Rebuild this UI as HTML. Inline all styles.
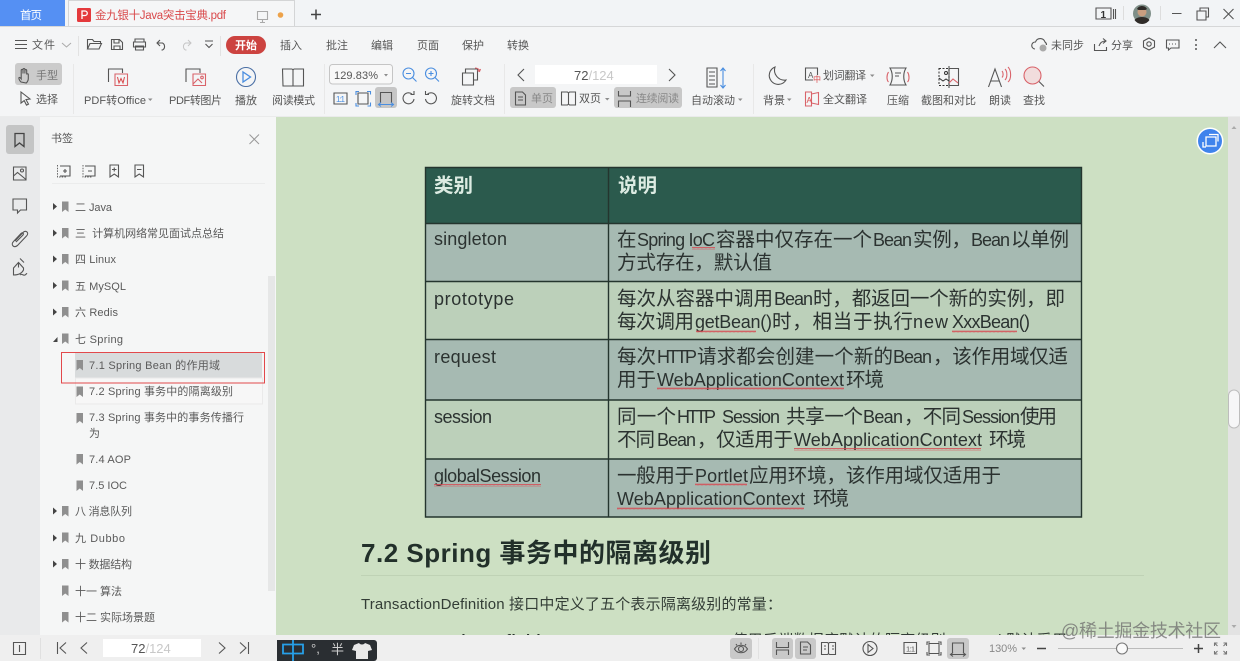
<!DOCTYPE html>
<html><head><meta charset="utf-8"><title>PDF</title>
<style>
html,body{margin:0;padding:0;width:1240px;height:661px;overflow:hidden;background:#f4f5f6}
svg{display:block;filter:blur(.35px)}
text{font-family:"Liberation Sans","Noto Sans CJK SC",sans-serif;white-space:pre}
.u{font-size:11px;fill:#555}
.t{font-size:19.5px;fill:#2b3230}
.l{font-size:18px;fill:#2b3230}
.i{fill:none;stroke:#555;stroke-width:1.1}
.b{fill:none;stroke:#4a8ee0;stroke-width:1.1}
.r{fill:none;stroke:#d9636a;stroke-width:1.1}
.m{fill:#8c8c8c}
</style></head><body>
<svg width="1240" height="661" viewBox="0 0 1240 661" xmlns="http://www.w3.org/2000/svg">
<defs><pattern id="w" width="4" height="3" patternUnits="userSpaceOnUse"><path d="M0 2.200L1 .8L2 2.200L3 .8L4 2.200" fill="none" stroke="#d8474f" stroke-width=".8"/></pattern></defs>
<!-- backgrounds -->
<rect width="1240" height="661" fill="#f4f5f6"/>
<rect width="1240" height="26" fill="#f2f4f6"/>
<rect y="26" width="1240" height="1" fill="#d6d7d8"/>
<rect x="0" y="117" width="40" height="518" fill="#e9eaeb"/>
<rect x="40" y="117" width="236" height="518" fill="#f5f6f6"/>
<rect x="276" y="117" width="952" height="518" fill="#cde0c3"/>
<rect x="1228" y="117" width="12" height="518" fill="#e3e3e3"/>
<rect y="116" width="1240" height="1" fill="#eaebeb"/>

<!-- tabs -->
<rect width="65" height="26" fill="#5590f3"/>
<text x="20" y="19" style="font-size:11.5px;fill:#fff" textLength="22">首页</text>
<path d="M68.500 26V.5H294.500V26" fill="#f5f6f7" stroke="#d4d5d6"/>
<rect x="77" y="8" width="14" height="14" rx="1.500" fill="#e4393c"/>
<path d="M82 19V11h3a2 2 0 0 1 0 4.500H82" fill="none" stroke="#fff" stroke-width="1.300"/>
<text x="95" y="19" style="font-size:11.5px;fill:#d9484a" textLength="131">金九银十Java突击宝典.pdf</text>
<path class="i" d="M257.500 11.500h10v8h-10zM262.500 19.500v2.500M260 22.500h5" style="stroke:#aaa"/>
<circle cx="280.500" cy="15" r="2.800" fill="#eda24a"/>
<path d="M316 9.500v10M311 14.500h10" stroke="#444" stroke-width="1.500"/>
<!-- title right -->
<path class="i" d="M1096 8h15v11h-15zM1113.500 9v10M1115.500 9v10"/>
<text x="1100.500" y="18" style="font-size:10px;fill:#333;font-weight:bold">1</text>
<rect x="1123" y="6" width="1" height="14" fill="#ddd"/>
<circle cx="1142" cy="13.500" r="9" fill="#7f8f88"/>
<circle cx="1142" cy="12" r="4.500" fill="#c99e80"/>
<path d="M1137 9c2-4 8-4 10 0l-1.500 1h-7zM1134.500 20c3-4 12-4 15 0a9 9 0 0 1-15 0z" fill="#2f2b28"/>
<rect x="1160" y="6" width="1" height="14" fill="#ddd"/>
<path class="i" d="M1172 13.500h9.500M1197 11h9v9h-9zM1200 11V8h8.500v9H1206"/>
<path class="i" d="M1223.500 9l10 10M1233.500 9l-10 10"/>

<!-- menu row -->
<path class="i" d="M15 40.500h12M15 44.500h12M15 48.500h12"/>
<text class="u" x="32" y="48.500" textLength="23">文件</text>
<path d="M62 43l4.500 4 4.500-4" fill="none" stroke="#aaa"/>
<rect x="78" y="36" width="1" height="20" fill="#e2e2e2"/>
<path class="i" d="M87.500 49V39.500h5l1.500 2h6.500v2M87.500 49l2.500-5.500h11.500L99 49z"/>
<path class="i" d="M111.500 39.500h8l3 3v7h-11zM114 39.500v3.500h5v-3.500M114 49.500v-3.500h6v3.500"/>
<path class="i" d="M135 42v-3h9v3M133.500 42h12v5h-12zM135.500 46h8v4h-8z"/>
<path class="i" d="M160 40l-3 3 3 3M157.500 43h5a4 4 0 0 1 0 7h-1"/>
<path d="M188 40l3 3-3 3M190.500 43h-5a4 4 0 0 0 0 7h1" fill="none" stroke="#c5c5c5"/>
<path class="i" d="M205 41h8M205.500 44l3.500 3.500 3.500-3.500"/>
<rect x="220" y="36" width="1" height="20" fill="#e2e2e2"/>
<rect x="226" y="36" width="40" height="18" rx="9" fill="#cc4340"/>
<text x="235" y="49" style="font-size:11px;fill:#fff;font-weight:bold" textLength="22">开始</text>
<text class="u" x="280" y="49" textLength="22">插入</text>
<text class="u" x="326" y="49" textLength="22">批注</text>
<text class="u" x="371" y="49" textLength="22">编辑</text>
<text class="u" x="417" y="49" textLength="22">页面</text>
<text class="u" x="462" y="49" textLength="22">保护</text>
<text class="u" x="507" y="49" textLength="22">转换</text>
<path class="i" d="M1035 49a3.500 3.500 0 0 1 .5-7 5 5 0 0 1 9.500 0 3.500 3.500 0 0 1 1.500 3"/>
<circle cx="1043" cy="48" r="3.500" fill="#aaa"/>
<text class="u" x="1051" y="49" textLength="33">未同步</text>
<path class="i" d="M1094.500 44v6.500h12V47M1099 46c1-3 3-5 6.500-5M1103 38.500l3 2.500-3 2.500"/>
<text class="u" x="1111" y="49" textLength="22">分享</text>
<path class="i" d="M1149 38l5.500 3v6l-5.500 3-5.500-3v-6z"/>
<circle class="i" cx="1149" cy="44" r="2.200"/>
<path class="i" d="M1166.500 40h12.500v8h-8l-2.500 2v-2h-2z"/>
<path d="M1169 44h1M1172 44h1M1175 44h1" stroke="#555"/>
<circle cx="1196" cy="40" r="1" fill="#555"/><circle cx="1196" cy="45" r="1" fill="#555"/><circle cx="1196" cy="49" r="1" fill="#555"/>
<path class="i" d="M1214 48l6-6 6 6"/>

<!-- ribbon left -->
<rect x="15" y="63" width="47" height="22" rx="3" fill="#cbcbcb"/>
<path class="i" d="M21 82c-2-2-2.500-4-1.800-4.500.8-.4 1.400.5 2 1.300V70.500c0-1.400 1.800-1.400 1.800 0v3-4c0-1.300 1.900-1.300 1.900 0v4-3c0-1.300 1.800-1.300 1.800 0v4c0-.9 1.600-.9 1.600 0v4c0 2-1 3.500-2 4.500z"/>
<text x="36" y="79" style="font-size:11px;fill:#777" textLength="22">手型</text>
<path class="i" d="M21 92l9 7-4 .6 2.500 4.500-2 1-2.300-4.500-3.200 2.500z"/>
<text class="u" x="36" y="103" textLength="22">选择</text>
<rect x="73" y="64" width="1" height="50" fill="#e8e8e8"/>
<!-- PDF to office -->
<path class="i" d="M108.500 82V69h14v4"/><path class="r" d="M115 74h12.500v11.500H115z"/>
<path d="M117.500 77l1.500 6 2-4.500 2 4.500 1.500-6" fill="none" stroke="#d9484a"/>
<text class="u" x="84" y="104" textLength="62">PDF转Office</text>
<path class="m" d="M148 98.500h4.500l-2.250 2.500z"/>
<path class="i" d="M186 82V69h14v4"/><path class="r" d="M193 74h12.500v11.500H193z"/><circle class="r" cx="202" cy="77.500" r="1.300"/><path class="r" d="M193 84l5-5 4 4"/>
<text class="u" x="169" y="104" textLength="53">PDF转图片</text>
<circle cx="246" cy="77" r="9.500" fill="none" stroke="#4a6fa5" stroke-width="1.100"/>
<path d="M243 72v10l7.500-5z" fill="none" stroke="#4a8ee0" stroke-width="1.300"/>
<text class="u" x="235" y="104" textLength="22">播放</text>
<path class="i" d="M282.500 69h9.500l1 1 1-1h9.500v17h-20.500zM293 70v16"/>
<text class="u" x="272" y="104" textLength="43">阅读模式</text>
<rect x="324" y="64" width="1" height="50" fill="#e8e8e8"/>
<!-- zoom -->
<rect x="329.500" y="64.500" width="63" height="19.500" rx="3" fill="#f8f8f8" stroke="#c5c5c5"/>
<text x="334" y="79" style="font-size:11px;fill:#555" textLength="44">129.83%</text>
<path class="m" d="M384 74h4l-2 2.500z"/>
<circle class="b" cx="408.500" cy="73.500" r="5.500"/><path class="b" d="M412.500 77.500l4 4M406 73.500h5"/>
<circle class="b" cx="431" cy="73.500" r="5.500"/><path class="b" d="M435 77.500l4 4M428.500 73.500h5M431 71v5"/>
<path class="i" d="M334 93h13v11h-13z"/><text x="336" y="102" style="font-size:8px;fill:#4a8ee0" textLength="9">1:1</text>
<path class="i" d="M358 93h10v11h-10z"/><path class="b" d="M356 95v-3.500h3M367 91.500h3.500v3M370.500 102.500v3.500h-3M359 106h-3v-3"/>
<rect x="375" y="87" width="22" height="21" rx="3" fill="#c6c6c6"/>
<path class="i" d="M380.500 103V92.500h11V103"/><path class="b" d="M378.500 104.500h15M381 102.500l-2.500 2 2.500 2M391 102.500l2.500 2-2.500 2"/>
<path class="i" d="M412 94a5.500 5.500 0 1 0 2 5M414 91v3.500h-3.500"/>
<path class="i" d="M427.500 94a5.500 5.500 0 1 1-2 5M425.500 91v3.500h3.500"/>
<!-- rotate -->
<path class="i" d="M462.500 73h11v12h-11zM465.500 73v-4h12v11h-4" stroke-width="1.200"/>
<path class="r" d="M475 68c2.500 0 4 1 4.500 3M480.500 69l-1 2.500-2-1"/>
<text class="u" x="451" y="104" textLength="44">旋转文档</text>
<rect x="504" y="64" width="1" height="50" fill="#e8e8e8"/>
<!-- page nav -->
<path class="i" d="M524 69l-6 6 6 6M669 69l6 6-6 6" stroke-width="1.300"/>
<rect x="535" y="65" width="122" height="19" fill="#fff"/>
<text x="574" y="80" style="font-size:13px;fill:#555">72<tspan fill="#c8c8c8">/124</tspan></text>
<rect x="510" y="87" width="46" height="21" rx="3" fill="#c8c8c8"/>
<path class="i" d="M515.500 92h7l3 3v10h-10zM518 97h5M518 100h5"/>
<text x="531" y="102" style="font-size:11px;fill:#888" textLength="22">单页</text>
<path class="i" d="M561.500 92h6l1 1 1-1h6v13h-6l-1-1-1 1h-6zM568.500 93v11"/>
<text class="u" x="579" y="102" textLength="22">双页</text>
<path class="m" d="M605 98h4.500l-2.250 2.500z"/>
<rect x="614" y="87" width="68" height="21" rx="3" fill="#c8c8c8"/>
<path class="i" d="M618.500 91v5h12v-5M618.500 107v-6h12v6"/>
<text x="636" y="102" style="font-size:11px;fill:#888" textLength="43">连续阅读</text>
<path class="i" d="M707 68h10v19h-10zM709 72h6M709 76h6M709 80h6M709 84h6"/>
<path class="b" d="M723 69v18M720.500 71l2.500-3 2.500 3M720.500 85l2.500 3 2.500-3"/>
<text class="u" x="691" y="104" textLength="44">自动滚动</text>
<path class="m" d="M738 98.500h4.500l-2.250 2.500z"/>
<rect x="753" y="64" width="1" height="50" fill="#e8e8e8"/>
<path class="i" d="M775 67a9 9 0 1 0 11 13 10 10 0 0 1-11-13z"/>
<text class="u" x="763" y="104" textLength="22">背景</text>
<path class="m" d="M787 98.500h4.500l-2.250 2.500z"/>
<path class="i" d="M805.500 68h12v12h-12z"/><text x="808" y="78" style="font-size:8px;fill:#555">A</text>
<rect x="813" y="75" width="7" height="7" fill="#f4f5f6"/><text x="813" y="82" style="font-size:8px;fill:#d9484a">中</text>
<text class="u" x="823" y="79" textLength="43">划词翻译</text>
<path class="m" d="M870 74.500h4.500l-2.250 2.500z"/>
<path class="r" d="M805.500 92h6v14h-6zM811.500 94l7-1.500v12l-7-1.500"/>
<text x="806.500" y="103" style="font-size:8px;fill:#d9484a">A</text>
<text class="u" x="823" y="103" textLength="44">全文翻译</text>
<!-- compress -->
<path class="i" d="M890 68h16c-3 5-3 12 0 17h-16c3-5 3-12 0-17zM895 73h6M895 76h4"/>
<path class="r" d="M888.500 72c-2 3-2 8 0 10M907.500 72c2 3 2 8 0 10"/>
<text class="u" x="887" y="104" textLength="22">压缩</text>
<!-- screenshot -->
<path class="i" d="M949 68.500h9.500v17H949M949 66v22"/>
<path d="M939 68.500h10v17h-10z" fill="none" stroke="#333" stroke-dasharray="2 1.500"/>
<path class="r" d="M949 83l4-4 5 4"/><path d="M939 78l4 3 3-2 3 2" fill="none" stroke="#333"/><circle cx="946" cy="73" r="1.500" fill="none" stroke="#333"/>
<text class="u" x="921" y="104" textLength="55">截图和对比</text>
<!-- read -->
<path class="i" d="M988.500 87l6.500-18 6.500 18M991 81h8"/>
<path class="r" d="M1002 71c1.500 1.500 1.500 5 0 6.500M1005 69c2.500 2.500 2.500 8.500 0 11M1008 67c3.500 3.500 3.500 12 0 15"/>
<text class="u" x="989" y="104" textLength="22">朗读</text>
<!-- find -->
<circle cx="1032.500" cy="75.500" r="8.500" fill="#f1dddd" stroke="#d9636a" stroke-width="1.100"/>
<path class="i" d="M1039 81.500l5 5"/>
<text class="u" x="1023" y="104" textLength="22">查找</text>

<!-- left strip -->
<rect x="6" y="125" width="28" height="29" rx="3" fill="#c4c5c5"/>
<path d="M15 133.500h9v13l-4.500-3.500-4.500 3.500z" fill="none" stroke="#444" stroke-width="1.300"/>
<path class="i" d="M13.500 167h12.500v13h-12.500z"/><circle class="i" cx="22" cy="170.500" r="1.500"/><path class="i" d="M13.500 176l4-3.500 8.500 7"/>
<path class="i" d="M13 199h13.500v11h-6l-3 3v-3H13z"/>
<path class="i" d="M15 241l8-8.500c3-3 6.500.5 3.500 3.500l-9 9.500c-4 3-7-1-4-4l7.500-8c1.500-1.500 3 0 2 1.500l-7 7"/>
<path class="i" d="M13.500 268l5-5.500 5 5.500v2c-2 4-6 5-10 5zM18.500 262.500v5M20 258.500l4 4"/><path class="i" d="M20 275c2-2 3 1 5 0s1-2 2-1"/>

<!-- bookmarks panel -->
<text x="51" y="142" style="font-size:11px;fill:#555" textLength="22">书签</text>
<path d="M249.500 134.500l9.500 9.500M259 134.500L249.500 144" fill="none" stroke="#999"/>
<path class="i" d="M60 166h10v10H60M63 171h4M65 169v4"/><path d="M57.500 165v12h9" fill="none" stroke="#666" stroke-dasharray="1.500 1.200"/>
<path class="i" d="M85 166h10v10H85M88 171h4"/><path d="M83 165v12h9" fill="none" stroke="#666" stroke-dasharray="1.500 1.200"/>
<path class="i" d="M110 165h8.500v12l-4.250-3-4.250 3zM112 169.500h4.500M114.250 167.500v4"/>
<path class="i" d="M135 165h8.500v12l-4.250-3-4.250 3zM137 169.500h4.500"/>
<rect x="52" y="183" width="213" height="1" fill="#ebecec"/>
<rect x="268" y="276" width="7" height="315" fill="#e6e7e7"/>
<rect x="75" y="352" width="187" height="26" fill="#d8dbdc"/>
<rect x="75.500" y="378" width="187" height="26" fill="#f7f7f7" stroke="#eaeaea"/>
<rect x="61.500" y="352.500" width="203" height="30.500" fill="none" stroke="#e2484b" stroke-width="1"/>

<g style="font-size:11px" fill="#5a5a5a">
<path fill="#444" d="M53 203v7l4-3.500zM53 229.500v7l4-3.500zM53 255.500v7l4-3.500zM53 282v7l4-3.500zM53 308.500v7l4-3.500zM53 507.500v7l4-3.500zM53 534.500v7l4-3.500zM53 560.500v7l4-3.500zM53 342l4.500-5v5z"/>
<path fill="#8f8f8f" d="M62 201.500h6.500v10.500l-3.250-2.500-3.250 2.500zM62 228h6.500v10.500l-3.250-2.500-3.250 2.500zM62 254h6.500v10.500l-3.250-2.500-3.250 2.500zM62 280.500h6.500v10.500l-3.250-2.500-3.250 2.500zM62 307h6.500v10.500l-3.250-2.500-3.250 2.500zM62 333.500h6.500v10.500l-3.250-2.500-3.250 2.500zM76.500 360h6.500v10.500l-3.250-2.500-3.250 2.500zM76.500 386.500h6.500v10.500l-3.250-2.500-3.250 2.500zM76.500 413h6.500v10.500l-3.250-2.500-3.250 2.500zM76.500 454h6.500v10.500l-3.250-2.500-3.250 2.500zM76.500 480.500h6.500v10.500l-3.250-2.500-3.250 2.500zM62 506h6.500v10.500l-3.250-2.500-3.250 2.500zM62 532.500h6.500v10.500l-3.250-2.500-3.250 2.500zM62 559h6.500v10.500l-3.250-2.500-3.250 2.500zM62 585.500h6.500v10.500l-3.250-2.500-3.250 2.500zM62 612h6.500v10.500l-3.250-2.500-3.250 2.500z"/>
<text x="75" y="211" textLength="37">二 Java</text>
<text x="75" y="237" textLength="149">三&#160;&#160;计算机网络常见面试点总结</text>
<text x="75" y="263" textLength="41">四 Linux</text>
<text x="75" y="290" textLength="51">五 MySQL</text>
<text x="75" y="316" textLength="43">六 Redis</text>
<text x="75" y="343" textLength="48">七 Spring</text>
<text x="89" y="369" textLength="131">7.1 Spring Bean 的作用域</text>
<text x="89" y="395" textLength="144">7.2 Spring 事务中的隔离级别</text>
<text x="89" y="421" textLength="155">7.3 Spring 事务中的事务传播行</text>
<text x="89" y="437" textLength="11">为</text>
<text x="89" y="463" textLength="42">7.4 AOP</text>
<text x="89" y="489" textLength="38">7.5 IOC</text>
<text x="75" y="515" textLength="57">八 消息队列</text>
<text x="75" y="542" textLength="50">九 Dubbo</text>
<text x="75" y="568" textLength="57">十 数据结构</text>
<text x="75" y="595" textLength="47">十一 算法</text>
<text x="75" y="621" textLength="80">十二 实际场景题</text>
</g>

<!-- table -->
<rect x="425" y="167.500" width="657" height="56" fill="#2b5a4d"/>
<rect x="425" y="223" width="657" height="58" fill="#a6bab2"/>
<rect x="425" y="281" width="657" height="58" fill="#bcd0ba"/>
<rect x="425" y="339" width="657" height="61" fill="#a6bab2"/>
<rect x="425" y="400" width="657" height="59" fill="#bcd0ba"/>
<rect x="425" y="459" width="657" height="58" fill="#a6bab2"/>
<path d="M425.500 167.500H1081.500V517H425.500zM608.500 167.500V517M425 223.500H1082M425 281.500H1082M425 339.500H1082M425 400H1082M425 459H1082" fill="none" stroke="#24352e" stroke-width="1.400"/>
<text x="434" y="192" style="font-size:19.5px;font-weight:bold;fill:#dcebe2" textLength="39">类别</text>
<text x="618" y="192" style="font-size:19.5px;font-weight:bold;fill:#dcebe2" textLength="39">说明</text>

<text class="l" x="434" y="245" textLength="73">singleton</text>
<text class="l" x="434" y="305" textLength="80">prototype</text>
<text class="l" x="434" y="363" textLength="62">request</text>
<text class="l" x="434" y="423" textLength="58">session</text>
<text class="l" x="434" y="482" textLength="107">globalSession</text>

<!-- row 1 -->
<text class="t" x="617" y="246">在</text>
<text class="l" x="637" y="246" textLength="78">Spring IoC</text>
<text class="t" x="716" y="246" textLength="156">容器中仅存在一个</text>
<text class="l" x="873" y="246" textLength="39">Bean</text>
<text class="t" x="913" y="246" textLength="58">实例，</text>
<text class="l" x="971" y="246" textLength="39">Bean</text>
<text class="t" x="1011" y="246" textLength="58">以单例</text>
<text class="t" x="617" y="269" textLength="155">方式存在，默认值</text>
<!-- row 2 -->
<text class="t" x="617" y="305" textLength="156">每次从容器中调用</text>
<text class="l" x="774" y="305" textLength="39">Bean</text>
<text class="t" x="813" y="305" textLength="252">时，都返回一个新的实例，即</text>
<text class="t" x="617" y="328" textLength="77">每次调用</text>
<text class="l" x="695" y="328" textLength="77">getBean()</text>
<text class="t" x="772" y="328" textLength="141">时，相当于执行</text>
<text class="l" x="913" y="328" textLength="35">new</text>
<text class="l" x="952" y="328" textLength="78">XxxBean()</text>
<!-- row 3 -->
<text class="t" x="617" y="363" textLength="39">每次</text>
<text class="l" x="657" y="363" textLength="40">HTTP</text>
<text class="t" x="697" y="363" textLength="196">请求都会创建一个新的</text>
<text class="l" x="893" y="363" textLength="39">Bean</text>
<text class="t" x="933" y="363" textLength="135">，该作用域仅适</text>
<text class="t" x="617" y="386" textLength="39">用于</text>
<text class="l" x="657" y="386" textLength="187">WebApplicationContext</text>
<text class="t" x="846" y="386" textLength="38">环境</text>
<!-- row 4 -->
<text class="t" x="617" y="423" textLength="59">同一个</text>
<text class="l" x="677" y="423" textLength="39">HTTP</text>
<text class="l" x="722" y="423" textLength="58">Session</text>
<text class="t" x="786" y="423" textLength="77">共享一个</text>
<text class="l" x="863" y="423" textLength="40">Bean</text>
<text class="t" x="904" y="423" textLength="57">，不同</text>
<text class="l" x="962" y="423" textLength="58">Session</text>
<text class="t" x="1020" y="423" textLength="37">使用</text>
<text class="t" x="617" y="446" textLength="38">不同</text>
<text class="l" x="657" y="446" textLength="39">Bean</text>
<text class="t" x="697" y="446" textLength="96">，仅适用于</text>
<text class="l" x="794" y="446" textLength="188">WebApplicationContext</text>
<text class="t" x="989" y="446" textLength="37">环境</text>
<!-- row 5 -->
<text class="t" x="617" y="482" textLength="77">一般用于</text>
<text class="l" x="695" y="482" textLength="53">Portlet</text>
<text class="t" x="749" y="482" textLength="252">应用环境，该作用域仅适用于</text>
<text class="l" x="617" y="505" textLength="188">WebApplicationContext</text>
<text class="t" x="813" y="505" textLength="36">环境</text>
<!-- spell underlines -->
<g fill="url(#w)">
<rect x="692" y="247" width="23" height="3"/>
<rect x="696" y="330" width="60" height="3"/>
<rect x="952" y="330" width="65" height="3"/>
<rect x="434" y="484" width="107" height="3"/>
<rect x="657" y="387" width="187" height="3"/>
<rect x="794" y="448" width="187" height="3"/>
<rect x="695" y="483" width="52" height="3"/>
<rect x="617" y="507" width="187" height="3"/>
</g>

<!-- doc text -->
<text x="361" y="562" style="font-size:26px;font-weight:bold;fill:#22302a" textLength="350">7.2 Spring 事务中的隔离级别</text>
<rect x="361" y="575" width="783" height="1" fill="#bfd2b5"/>
<text x="361" y="609" style="font-size:15px;fill:#333d36" textLength="421">TransactionDefinition 接口中定义了五个表示隔离级别的常量：</text>
<text x="395" y="645" style="font-size:15px;font-weight:bold;fill:#2a332d" textLength="165">TransactionDefinition</text>
<text x="567" y="645" style="font-size:15px;fill:#333d36" textLength="500">ISOLATION_DEFAULT: 使用后端数据库默认的隔离级别，Mysql 默认采用</text>

<!-- scrollbar -->
<path d="M1231.500 129l2.500-3 2.500 3z" fill="#aaa"/>
<path d="M1231.500 625l2.500 3 2.500-3z" fill="#aaa"/>
<rect x="1228.500" y="390" width="11" height="38" rx="5.500" fill="#f6f6f7" stroke="#bdbdbd"/>
<!-- float button -->
<circle cx="1210" cy="141" r="13.500" fill="#fff"/>
<circle cx="1210" cy="141" r="12" fill="#3f83ec"/>
<path d="M1206 137h10v9h-10zM1209 134.500h9v7" fill="none" stroke="#fff" stroke-width="1.300"/>
<path d="M1203 142v5h3" fill="none" stroke="#fff" stroke-width="1.300"/>

<!-- bottom bar -->
<rect y="635" width="1240" height="26" fill="#efefef"/>
<path class="i" d="M13.500 642.500h12v12h-12zM19.500 645v7"/>
<rect x="40" y="638" width="1" height="21" fill="#e0e0e0"/>
<path class="i" d="M57.500 642v12M66 642.500l-6 5.500 6 5.500M87 642.500l-6 5.500 6 5.500M219 642.500l6 5.500-6 5.500M240 642.500l6 5.500-6 5.500M248.500 642v12"/>
<rect x="103" y="639" width="98" height="18" fill="#fff"/>
<text x="131" y="653" style="font-size:13px;fill:#555">72<tspan fill="#c8c8c8">/124</tspan></text>
<!-- IME -->
<path d="M277 640H374a3 3 0 0 1 3 3V658a3 3 0 0 1-3 3H277z" fill="#2a2e32"/>
<path d="M283 644.500h20v9h-20zM293 640v21" fill="none" stroke="#27a0e8" stroke-width="1.800"/>
<text x="311" y="653" style="font-size:13px;fill:#cfcfcf">°,</text>
<text x="331" y="654" style="font-size:13px;fill:#cfcfcf" textLength="15">半</text>
<path d="M354 645l5-2c1 2 5 2 6 0l5 2 2 5-4 1v8h-12v-8l-4-1z" fill="#e8e8e8"/>
<!-- eye -->
<rect x="730" y="638" width="22" height="21" rx="3" fill="#c9c9c9"/>
<path class="i" d="M734.500 649c3-5 10-5 13 0-3 5-10 5-13 0z"/><circle class="i" cx="741" cy="649" r="2.500"/><path class="i" d="M736 644l1 1.500M741 642.500v2M746 644l-1 1.500"/>
<rect x="758" y="638" width="1" height="21" fill="#e2e2e2"/>
<rect x="772" y="638" width="21" height="21" rx="3" fill="#c9c9c9"/>
<path class="i" d="M776.500 642v5.500h12V642M776.500 655v-5h12v5"/>
<rect x="795" y="638" width="21" height="21" rx="3" fill="#c9c9c9"/>
<path class="i" d="M800.500 642h7l3 3v9h-10zM803 647h5M803 650h4"/>
<path class="i" d="M821.500 642.500h6l1 1 1-1h6v12h-6l-1-1-1 1h-6zM828.500 643.500v10M824 646h2M824 649h2M832 646h2M832 649h2"/>
<circle class="i" cx="870" cy="648.500" r="7"/><path class="i" d="M868 644.500v8l5-4z"/>
<path class="i" d="M904 642.500h12.500v11H904z"/><text x="906" y="651.500" style="font-size:7.500px;fill:#555" textLength="9">1:1</text>
<path class="i" d="M929 643.500h10v10h-10zM927 645v-3h3M938 642h3v3M941 652v3h-3M930 655h-3v-3"/>
<rect x="947" y="638" width="22" height="21" rx="3" fill="#c9c9c9"/>
<path class="i" d="M952.500 653.500V643h11v10.500M950.500 654.500h15M953 652.500l-2.500 2 2.500 2M963 652.500l2.500 2-2.500 2"/>
<text x="989" y="652" style="font-size:11px;fill:#888" textLength="28">130%</text>
<path class="m" d="M1021.500 647.500h4.500l-2.250 2.500z"/>
<path d="M1037 648.500h9" stroke="#444" stroke-width="1.500"/>
<rect x="1058" y="648" width="125" height="1" fill="#bbb"/>
<circle cx="1122" cy="648.500" r="5.500" fill="#fafafa" stroke="#777" stroke-width="1.100"/>
<path d="M1194 648.500h9M1198.500 644v9" stroke="#444" stroke-width="1.500"/>
<path class="i" d="M1214.500 643l3 3M1214.500 646v-3h3M1226.500 643l-3 3M1226.500 646v-3h-3M1214.500 654l3-3M1214.500 651v3h3M1226.500 654l-3-3M1226.500 651v3h-3" style="stroke:#777"/>

<!-- watermark -->
<text x="1061" y="637" style="font-size:18px;fill:#6c6c6c;fill-opacity:.75" textLength="160">@稀土掘金技术社区</text>
</svg>
</body></html>
